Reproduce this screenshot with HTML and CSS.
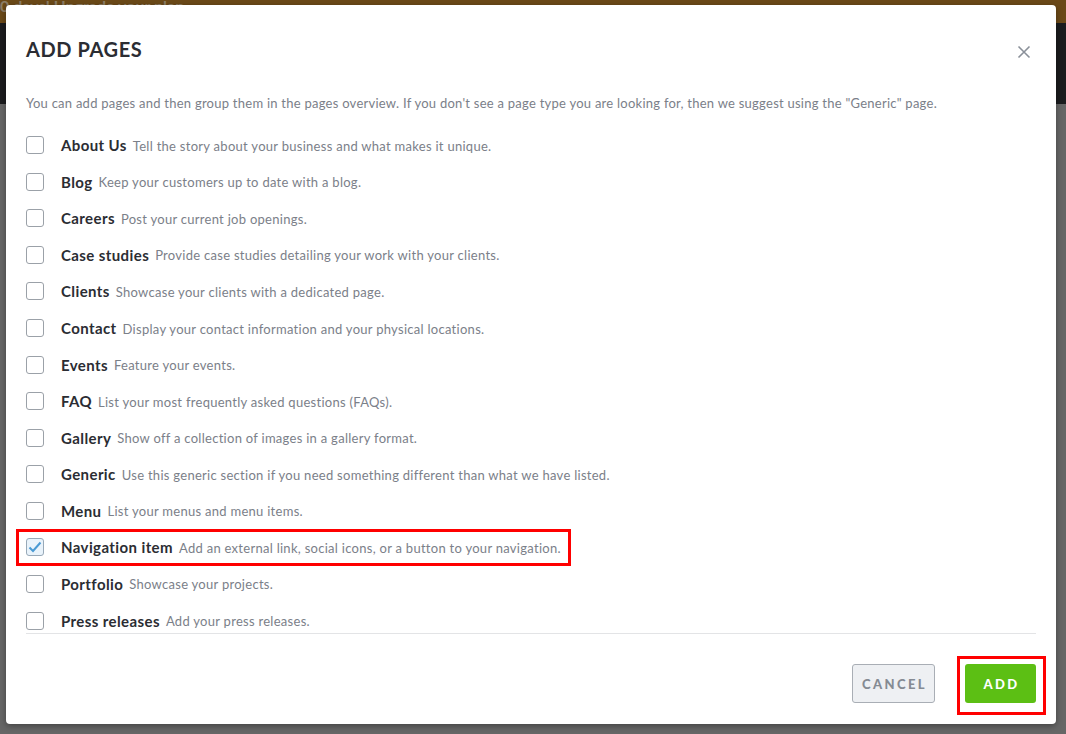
FILE: index.html
```html
<!DOCTYPE html>
<html lang="en">
<head>
    <meta charset="UTF-8">
    <meta name="viewport" content="width=device-width, initial-scale=1.0">
    <title>Add pages</title>
    <link rel="stylesheet" href="styles.css">
</head>
<body>
    <div class="backdrop">
        <div class="trial-bar">0 days! Upgrade your plan</div>
        <div class="top-nav"></div>
        <div class="page-area"></div>
    </div>

    <div class="modal">
        <div class="modal-header">
            <h1>ADD PAGES</h1>
            <button class="close-btn" aria-label="Close">
                <svg width="14" height="14" viewBox="0 0 14 14"><path d="M1.5 1.5L12.5 12.5M12.5 1.5L1.5 12.5" stroke="#8a9099" stroke-width="1.6" fill="none"/></svg>
            </button>
        </div>
        <p class="intro">You can add pages and then group them in the pages overview. If you don't see a page type you are looking for, then we suggest using the "Generic" page.</p>

        <ul class="page-list">
            <li class="page-row"><span class="checkbox"></span><span class="page-name">About Us</span><span class="page-desc">Tell the story about your business and what makes it unique.</span></li>
            <li class="page-row"><span class="checkbox"></span><span class="page-name">Blog</span><span class="page-desc">Keep your customers up to date with a blog.</span></li>
            <li class="page-row"><span class="checkbox"></span><span class="page-name">Careers</span><span class="page-desc">Post your current job openings.</span></li>
            <li class="page-row"><span class="checkbox"></span><span class="page-name">Case studies</span><span class="page-desc">Provide case studies detailing your work with your clients.</span></li>
            <li class="page-row"><span class="checkbox"></span><span class="page-name">Clients</span><span class="page-desc">Showcase your clients with a dedicated page.</span></li>
            <li class="page-row"><span class="checkbox"></span><span class="page-name">Contact</span><span class="page-desc">Display your contact information and your physical locations.</span></li>
            <li class="page-row"><span class="checkbox"></span><span class="page-name">Events</span><span class="page-desc">Feature your events.</span></li>
            <li class="page-row"><span class="checkbox"></span><span class="page-name">FAQ</span><span class="page-desc">List your most frequently asked questions (FAQs).</span></li>
            <li class="page-row"><span class="checkbox"></span><span class="page-name">Gallery</span><span class="page-desc">Show off a collection of images in a gallery format.</span></li>
            <li class="page-row"><span class="checkbox"></span><span class="page-name">Generic</span><span class="page-desc">Use this generic section if you need something different than what we have listed.</span></li>
            <li class="page-row"><span class="checkbox"></span><span class="page-name">Menu</span><span class="page-desc">List your menus and menu items.</span></li>
            <li class="page-row selected">
                <span class="checkbox checked">
                    <svg width="14" height="12" viewBox="0 0 14 12"><path d="M1.5 6.5L5 10L12.5 1.5" stroke="#4a9ad4" stroke-width="2" fill="none"/></svg>
                </span>
                <span class="page-name">Navigation item</span><span class="page-desc">Add an external link, social icons, or a button to your navigation.</span>
                <span class="highlight"></span>
            </li>
            <li class="page-row"><span class="checkbox"></span><span class="page-name">Portfolio</span><span class="page-desc">Showcase your projects.</span></li>
            <li class="page-row"><span class="checkbox"></span><span class="page-name">Press releases</span><span class="page-desc">Add your press releases.</span></li>
        </ul>

        <div class="modal-footer">
            <button class="cancel-btn">CANCEL</button>
            <button class="add-btn">ADD<span class="highlight"></span></button>
        </div>
    </div>
</body>
</html>
```

FILE: styles.css
```css
body {
    margin: 0;
    padding: 0;
    font-family: 'Lato', 'Liberation Sans', sans-serif;
    background-color: #666;
    overflow: hidden;
}
.backdrop {
    height: 734px;
    display: flex;
    flex-direction: column;
}
.trial-bar {
    height: 23px;
    box-sizing: border-box;
    padding-top: 1px;
    background-color: #6b4918;
    color: #8c7d66;
    font-size: 16px;
    font-weight: 700;
    line-height: 10px;
    overflow: hidden;
}
.top-nav {
    height: 81px;
    background-color: #1b1c1e;
}
.page-area {
    flex: 1;
    background-color: #666;
}
.modal {
    position: absolute;
    top: 5px;
    left: 6px;
    width: 1050px;
    height: 719px;
    box-sizing: border-box;
    padding: 0 20px;
    background-color: #fff;
    border-radius: 4px;
    box-shadow: 0 2px 6px rgba(0,0,0,0.35);
    display: flex;
    flex-direction: column;
}
.modal-header {
    display: flex;
    justify-content: space-between;
    align-items: center;
    padding-top: 31px;
}
h1 {
    margin: 0;
    font-size: 20px;
    font-weight: 700;
    color: #2b2d33;
    line-height: 26px;
    letter-spacing: 0.6px;
}
.close-btn {
    border: none;
    background: none;
    padding: 0;
    margin-right: 5px;
    margin-top: 6px;
    cursor: pointer;
    width: 14px;
    height: 14px;
}
.intro {
    margin: 31px 0 0 0;
    font-size: 13px;
    color: #7b8089;
    line-height: 20px;
    letter-spacing: 0.25px;
}
.page-list {
    list-style: none;
    margin: 14px 0 0 0;
    padding: 0;
    border-bottom: 1px solid #e3e4e6;
}
.page-row {
    position: relative;
    display: flex;
    align-items: center;
    height: 36.55px;
}
.page-row:last-child {
    height: 25px;
    padding-top: 6px;
}
.checkbox {
    width: 16px;
    height: 16px;
    border: 1px solid #9ba1a8;
    border-radius: 3px;
    background-color: #fff;
    margin-right: 17px;
    display: flex;
    align-items: center;
    justify-content: center;
    flex-shrink: 0;
}
.checkbox.checked {
    background-color: #e9f3fb;
    border-color: #98a9b8;
}
.page-name {
    font-size: 15px;
    font-weight: 700;
    color: #2b2d33;
    margin-right: 6px;
    letter-spacing: 0.4px;
}
.page-desc {
    font-size: 13px;
    color: #7b8089;
    padding-top: 1px;
    letter-spacing: 0.28px;
}
.highlight {
    position: absolute;
    border: 3px solid #f00;
    pointer-events: none;
}
.page-row .highlight {
    left: -10px;
    top: 0;
    width: 549px;
    height: 31px;
}
.modal-footer {
    display: flex;
    justify-content: flex-end;
    gap: 30px;
    padding-top: 30px;
}
.cancel-btn, .add-btn {
    height: 39px;
    border-radius: 3px;
    font-family: 'Lato', 'Liberation Sans', sans-serif;
    font-size: 13px;
    font-weight: 900;
    letter-spacing: 2.4px;
    cursor: pointer;
}
.cancel-btn {
    width: 83px;
    padding: 0 0 0 2px;
    background-color: #eef0f3;
    border: 1px solid #a9aeb5;
    color: #858b93;
}
.add-btn {
    position: relative;
    width: 71px;
    padding: 0 0 0 2px;
    background-color: #5cbf14;
    border: none;
    color: #fff;
}
.add-btn .highlight {
    left: -8px;
    top: -8px;
    width: 83px;
    height: 53px;
}
```
